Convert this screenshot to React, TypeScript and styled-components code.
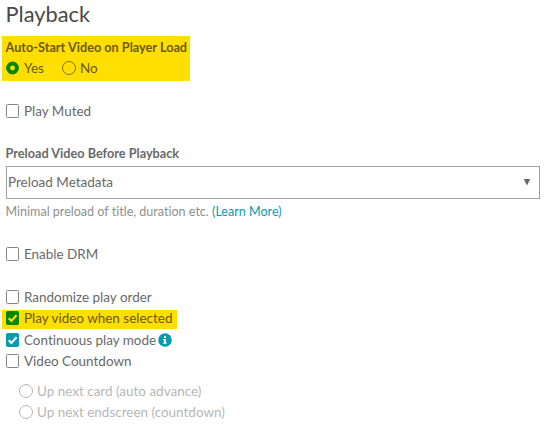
import React from "react";
import styled, { createGlobalStyle } from "styled-components";

const Global = createGlobalStyle`
  * { box-sizing: border-box; }
  body { margin: 0; background: #fff; font-family: Lato, sans-serif; color: #696969; overflow: hidden; font-variant-ligatures: none; }
`;

const Panel = styled.main`
  width: 544px;
  height: 429px;
  padding: 1px 4px 0 2px;
  display: flex;
  flex-direction: column;
  align-items: flex-start;
`;

const Title = styled.h1`
  margin: 0 0 9px;
  padding-left: 3.6px;
  font-size: 21.8px;
  font-weight: 400;
  line-height: 26px;
  color: #4a4a4a;
`;

const Highlight = styled.section<{ $w: number; $h: number; $top?: number }>`
  width: ${(p) => p.$w}px;
  height: ${(p) => p.$h}px;
  margin-top: ${(p) => p.$top ?? 0}px;
  background: #ffde00;
  color: #695b00;
`;

const FieldLabel = styled.div<{ $drop?: number }>`
  padding-left: 3.5px;
  padding-top: ${(p) => p.$drop ?? 0}px;
  font-size: 12.7px;
  font-weight: 700;
  line-height: 20px;
  height: 22px;
  white-space: nowrap;
`;

const Row = styled.label<{ $top?: number; $indent?: number; $muted?: boolean; $h?: number }>`
  display: flex;
  align-items: center;
  height: ${(p) => p.$h ?? 21}px;
  margin-top: ${(p) => p.$top ?? 0}px;
  padding-left: ${(p) => p.$indent ?? 4}px;
  font-size: 13.47px;
  line-height: 19px;
  white-space: nowrap;
  color: ${(p) => (p.$muted ? "#b7b7b7" : "inherit")};
`;

const Radios = styled.div`
  display: flex;
  gap: 14px;
`;

const Mark = styled.svg`
  display: block;
  flex: none;
  margin: 0 4px 1px 0;
`;

const Text = styled.span<{ $w: number }>`
  width: ${(p) => p.$w}px;
`;

const Info = styled.svg`
  display: block;
  margin: 0 0 1px 2px;
`;

const Select = styled.div`
  width: 534px;
  height: 33px;
  margin: 1px 0 0 4px;
  padding: 0 8px 2px 1px;
  border: 1px solid #a0a0a0;
  display: flex;
  align-items: center;
  justify-content: space-between;
  font-size: 13.5px;
`;

const Hint = styled.p`
  margin: 2px 0 0;
  padding-left: 3.5px;
  font-size: 12.55px;
  line-height: 21px;
  color: #8f8f8f;
  white-space: nowrap;
`;

const Link = styled.a`
  color: #079bb2;
`;

const Field = styled.section`
  margin-top: 21px;
`;

const Check = ({ fill }: { fill?: string }) => (
  <Mark width="14" height="14" viewBox="0 0 14 14">
    <rect x="0.5" y="0.5" width="12" height="13" rx="1" fill={fill ?? "#fff"} stroke={fill ?? "#858585"} />
    {fill && (
      <path d="M2.7 7.2 5.4 9.9 10.5 4.3" fill="none" stroke={fill === "#008700" ? "#ffde00" : "#fff"} strokeWidth="2.2" />
    )}
  </Mark>
);

const Radio = ({ stroke }: { stroke: string }) => (
  <Mark width="14" height="14" viewBox="0 0 14 14">
    <circle cx="7" cy="7" r="6.5" fill="none" stroke={stroke} />
  </Mark>
);

export default function App() {
  return (
    <>
      <Global />
      <Panel>
        <Title>Playback</Title>
        <Highlight $w={188} $h={45}>
          <FieldLabel $drop={1}>Auto-Start Video on Player Load</FieldLabel>
          <Radios>
            <Row>
              <Mark width="14" height="14" viewBox="0 0 14 14">
                <circle cx="6.5" cy="7" r="4.4" fill="#ffde00" stroke="#008700" strokeWidth="4" />
              </Mark>
              <Text $w={20}>Yes</Text>
            </Row>
            <Row>
              <Radio stroke="#857400" />
              <Text $w={18}>No</Text>
            </Row>
          </Radios>
        </Highlight>
        <Row $top={20}>
          <Check />
          <Text $w={68}>Play Muted</Text>
        </Row>
        <Field>
          <FieldLabel>Preload Video Before Playback</FieldLabel>
          <Select>
            Preload Metadata
            <svg width="8" height="8" viewBox="0 0 8 8">
              <path d="M0.8 1H7.2L4 7.5Z" fill="#666" />
            </svg>
          </Select>
          <Hint>
            Minimal preload of title, duration etc. <Link>(Learn More)</Link>
          </Hint>
        </Field>
        <Row $top={22}>
          <Check />
          Enable DRM
        </Row>
        <Row $top={22}>
          <Check />
          Randomize play order
        </Row>
        <Highlight $w={175} $h={19} $top={2}>
          <Row $h={17}>
            <Check fill="#008700" />
            Play video when selected
          </Row>
        </Highlight>
        <Row $top={1}>
          <Check fill="#079bb2" />
          Continuous play mode
          <Info width="14" height="14" viewBox="0 0 14 14">
            <circle cx="7" cy="7" r="6.8" fill="#079bb2" />
            <path d="M6 3.2H8V5H6ZM5.2 6H8V9.5H8.8V10.7H5.2V9.5H6V7.2H5.2Z" fill="#fff" />
          </Info>
        </Row>
        <Row>
          <Check />
          Video Countdown
        </Row>
        <Row $top={9} $indent={17} $muted>
          <Radio stroke="#b7b7b7" />
          Up next card (auto advance)
        </Row>
        <Row $indent={17} $muted>
          <Radio stroke="#b7b7b7" />
          Up next endscreen (countdown)
        </Row>
      </Panel>
    </>
  );
}
